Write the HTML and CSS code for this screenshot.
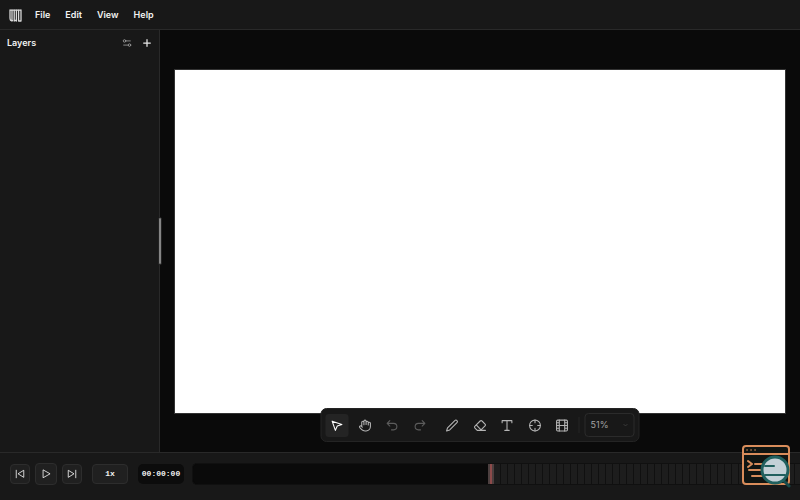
FILE: index.html
```html
<!DOCTYPE html>
<html lang="en">
<head>
<meta charset="utf-8">
<title>Animation editor</title>
<link rel="stylesheet" href="styles.css">
</head>
<body>
<header class="menubar">
  <svg class="logo" viewBox="0 0 13 13" aria-hidden="true"><path d="M1 1v7.500q0 3 1.200 3M3 1v11M5.200 1v11M7.400 1v11M9.600 1v11M12 1v11M1 1.200h11M2.500 11.500h1M5.200 11.500h2.200M9.600 12h2.400"/></svg>
  <nav class="menus">
    <button type="button">File</button>
    <button type="button">Edit</button>
    <button type="button">View</button>
    <button type="button">Help</button>
  </nav>
</header>
<main class="workspace">
  <aside class="layers">
    <div class="layers-head">
      <h2>Layers</h2>
      <button type="button" class="plain" aria-label="Layer settings"><svg viewBox="0 0 24 24"><circle cx="6" cy="7" r="3"/><path d="M9 7H20M4 17h11"/><circle cx="18" cy="17" r="3"/></svg></button>
      <button type="button" class="plain add" aria-label="Add layer"><svg viewBox="0 0 24 24"><path d="M12 4v16M4 12h16"/></svg></button>
    </div>
    <div class="resize"></div>
  </aside>
  <section class="stage">
    <div class="canvas"></div>
    <div class="toolbar">
      <div class="tools history">
        <button type="button" class="tool active" aria-label="Select"><svg viewBox="0 0 24 24"><path d="M3 4l6 17 3.500-8L21 10z"/></svg></button>
        <button type="button" class="tool" aria-label="Pan"><svg viewBox="0 0 24 24"><path d="M18 11V6a2 2 0 0 0-4 0M14 10V4a2 2 0 0 0-4 0v2M10 10.500V6a2 2 0 0 0-4 0v8M18 8a2 2 0 1 1 4 0v6a8 8 0 0 1-8 8h-2c-2.800 0-4.500-.860-5.990-2.340l-3.600-3.600a2 2 0 0 1 2.830-2.820L7 15"/></svg></button>
        <button type="button" class="tool dim" aria-label="Undo"><svg viewBox="0 0 24 24"><path d="M8 13L3 8l5-5M3 8h12a5.500 5.500 0 0 1 0 12h-4"/></svg></button>
        <button type="button" class="tool dim" aria-label="Redo"><svg viewBox="0 0 24 24"><path d="M16 13l5-5-5-5M21 8H9a5.500 5.500 0 0 0 0 12h4"/></svg></button>
      </div>
      <div class="tools draw">
        <button type="button" class="tool" aria-label="Pencil"><svg viewBox="0 0 24 24"><path d="M21.200 6.800a2.800 2.800 0 0 0-4-4L3.800 16.200 2 22l5.800-1.800z"/></svg></button>
        <button type="button" class="tool" aria-label="Eraser"><svg viewBox="0 0 24 24"><path d="M7 21l-4.300-4.300c-1-1-1-2.500 0-3.400l9.600-9.600c1-1 2.500-1 3.400 0l5.600 5.600c1 1 1 2.500 0 3.400L13 21M22 21H7M5 11l9 9"/></svg></button>
        <button type="button" class="tool" aria-label="Text"><svg viewBox="0 0 24 24"><path d="M3 7V3h18v4M12 3v18M8 21h8"/></svg></button>
        <button type="button" class="tool" aria-label="Center"><svg viewBox="0 0 24 24"><circle cx="12" cy="12" r="10"/><path d="M12 2v5M12 17v5M2 12h5M17 12h5"/></svg></button>
        <button type="button" class="tool" aria-label="Frames"><svg viewBox="0 0 24 24"><rect x="2" y="2" width="20" height="20" rx="2"/><path d="M7 2v20M17 2v20M7 12h10M2 7h5M2 12h5M2 17h5M17 7h5M17 12h5M17 17h5"/></svg></button>
      </div>
      <div class="zoom">
        <select aria-label="Zoom"><option>51%</option></select>
        <svg viewBox="0 0 24 24" aria-hidden="true"><path d="M5 9l7 7 7-7"/></svg>
      </div>
    </div>
  </section>
</main>
<footer class="player">
  <div class="transport">
    <button type="button" class="key" aria-label="First frame"><svg viewBox="0 0 24 24"><path d="M21 4v16L8 12zM3 3v18"/></svg></button>
    <button type="button" class="key play" aria-label="Play"><svg viewBox="0 0 24 24"><path d="M5 3v18l16-9z"/></svg></button>
    <button type="button" class="key" aria-label="Last frame"><svg viewBox="0 0 24 24"><path d="M3 4v16l13-8zM21 3v18"/></svg></button>
  </div>
  <button type="button" class="key speed">1x</button>
  <output class="time">00:00:00</output>
  <div class="timeline"><div class="head"></div><div class="frames"></div></div>
</footer>
<svg class="badge" viewBox="0 0 50 44" aria-hidden="true">
  <g fill="none" stroke="#d98d5b" stroke-width="2">
    <rect x="2" y="2" width="46" height="38" rx="3" fill="#101512"/>
    <path d="M2 10h46M7 17l4 3-4 3M14 20h10M8 26h14M11 32h12"/>
    <path d="M6 6h.100M10 6h.100M14 6h.100" stroke-width="1.500"/>
  </g>
  <path d="M43 37l5 5" stroke="#174c4c" stroke-width="3"/>
  <circle cx="34" cy="26" r="13" fill="#c3d1d7" stroke="#20605e" stroke-width="3"/>
  <path d="M24 22h9M24 31h20" stroke="#20605e" stroke-width="2"/>
</svg>
</body>
</html>
```
FILE: styles.css
```css
* { box-sizing: border-box; }
body {
  margin: 0;
  height: 100vh;
  display: flex;
  flex-direction: column;
  background: #181818;
  color: #f2f2f2;
  font: 600 9px/12px Inter, sans-serif;
  overflow: hidden;
}
button, select { font: inherit; color: inherit; padding: 0; border: 0; background: none; }
svg { display: block; fill: none; stroke: currentColor; stroke-width: 2; stroke-linecap: round; stroke-linejoin: round; }
.menubar {
  height: 30px;
  flex: none;
  display: flex;
  align-items: center;
  gap: 13px;
  padding: 1px 9px 0;
  border-bottom: 1px solid #292929;
}
.logo { width: 13px; height: 13px; stroke-width: 1.3; color: #d8d8d8; }
.menus { display: flex; gap: 15px; }
.workspace { flex: 1; display: flex; min-height: 0; }
.layers { width: 20%; position: relative; z-index: 1; border-right: 1px solid #292929; }
.layers-head { display: flex; align-items: center; padding: 7px 7px 0; }
h2 { font: inherit; margin: 0; flex: 1; }
.plain { width: 10px; height: 12px; display: grid; place-items: center; color: #a0a0a0; }
.plain svg { width: 10px; height: 10px; }
.add { margin-left: 10px; color: #e6e6e6; }
.add svg { stroke-width: 3; }
.resize {
  position: absolute;
  right: -3px;
  top: 50%;
  width: 4px;
  height: 48px;
  transform: translateY(-50%);
  border: 1px solid #222;
  border-radius: 2px;
  background: #858585;
}
.stage { flex: 1; position: relative; background: #0a0a0a; display: grid; align-items: center; padding: 1px 15px 0; }
.canvas { aspect-ratio: 16 / 9; background: #fff; outline: 1px solid #333; }
.toolbar {
  position: absolute;
  bottom: 10px;
  left: 50%;
  transform: translateX(-50%);
  display: flex;
  align-items: center;
  padding: 4px;
  border: 1px solid #242424;
  border-radius: 6px;
  background: #181818;
}
.tools { display: flex; justify-content: space-between; }
.history { width: 106px; margin-right: 9px; }
.draw { width: 133px; }
.tool { width: 23px; height: 23px; border-radius: 3px; display: grid; place-items: center; color: #b4b4b4; }
.tool svg { width: 13px; height: 13px; }
.active { background: #242424; color: #fff; }
.dim { color: #5c5c5c; }
.zoom { position: relative; margin-left: 5px; padding-left: 6px; }
.zoom::before { content: ""; position: absolute; left: 0; top: 4px; bottom: 4px; width: 1px; background: #242424; }
.zoom select {
  appearance: none;
  width: 50px;
  height: 24px;
  padding: 0 5px;
  border: 1px solid #2b2b2b;
  border-radius: 4px;
  color: #a3a3a3;
  font-weight: 400;
}
.zoom svg { position: absolute; right: 6px; top: 9px; width: 6px; height: 6px; color: #555; }
.player {
  flex: none;
  height: 48px;
  display: flex;
  align-items: center;
  padding: 0 0 5px 10px;
  border-top: 1px solid #292929;
  font: 700 8px/12px "Liberation Mono", monospace;
}
.transport { display: flex; align-items: center; gap: 5px; }
.key {
  width: 20px;
  height: 20px;
  display: grid;
  place-items: center;
  background: #202020;
  border: 1px solid #2d2d2d;
  border-radius: 4px;
}
.key svg { width: 10px; height: 10px; }
.play { width: 22px; height: 22px; }
.speed { width: 36px; margin-left: 10px; }
.time { width: 46px; margin: 0 8px 0 10px; line-height: 20px; text-align: center; background: #0c0c0c; border-radius: 5px; }
.timeline { flex: 1; height: 22px; display: flex; background: #0a0a0a; border: 1px solid #101010; border-right: 0; border-radius: 5px 0 0 5px; }
.head { width: calc(49% + 4px); border-right: 6px solid #4c3f3f; background: #0a0a0a; position: relative; border-radius: 5px 0 0 5px; }
.head::after { content: ""; position: absolute; right: -4px; top: 0; bottom: 0; width: 2px; background: #8c4a4a; }
.frames { flex: 1; background: repeating-linear-gradient(90deg, #1d1d1d 0 6px, #101010 6px 7px); }
.badge { position: absolute; right: 9px; bottom: 12px; width: 50px; height: 44px; }
```
